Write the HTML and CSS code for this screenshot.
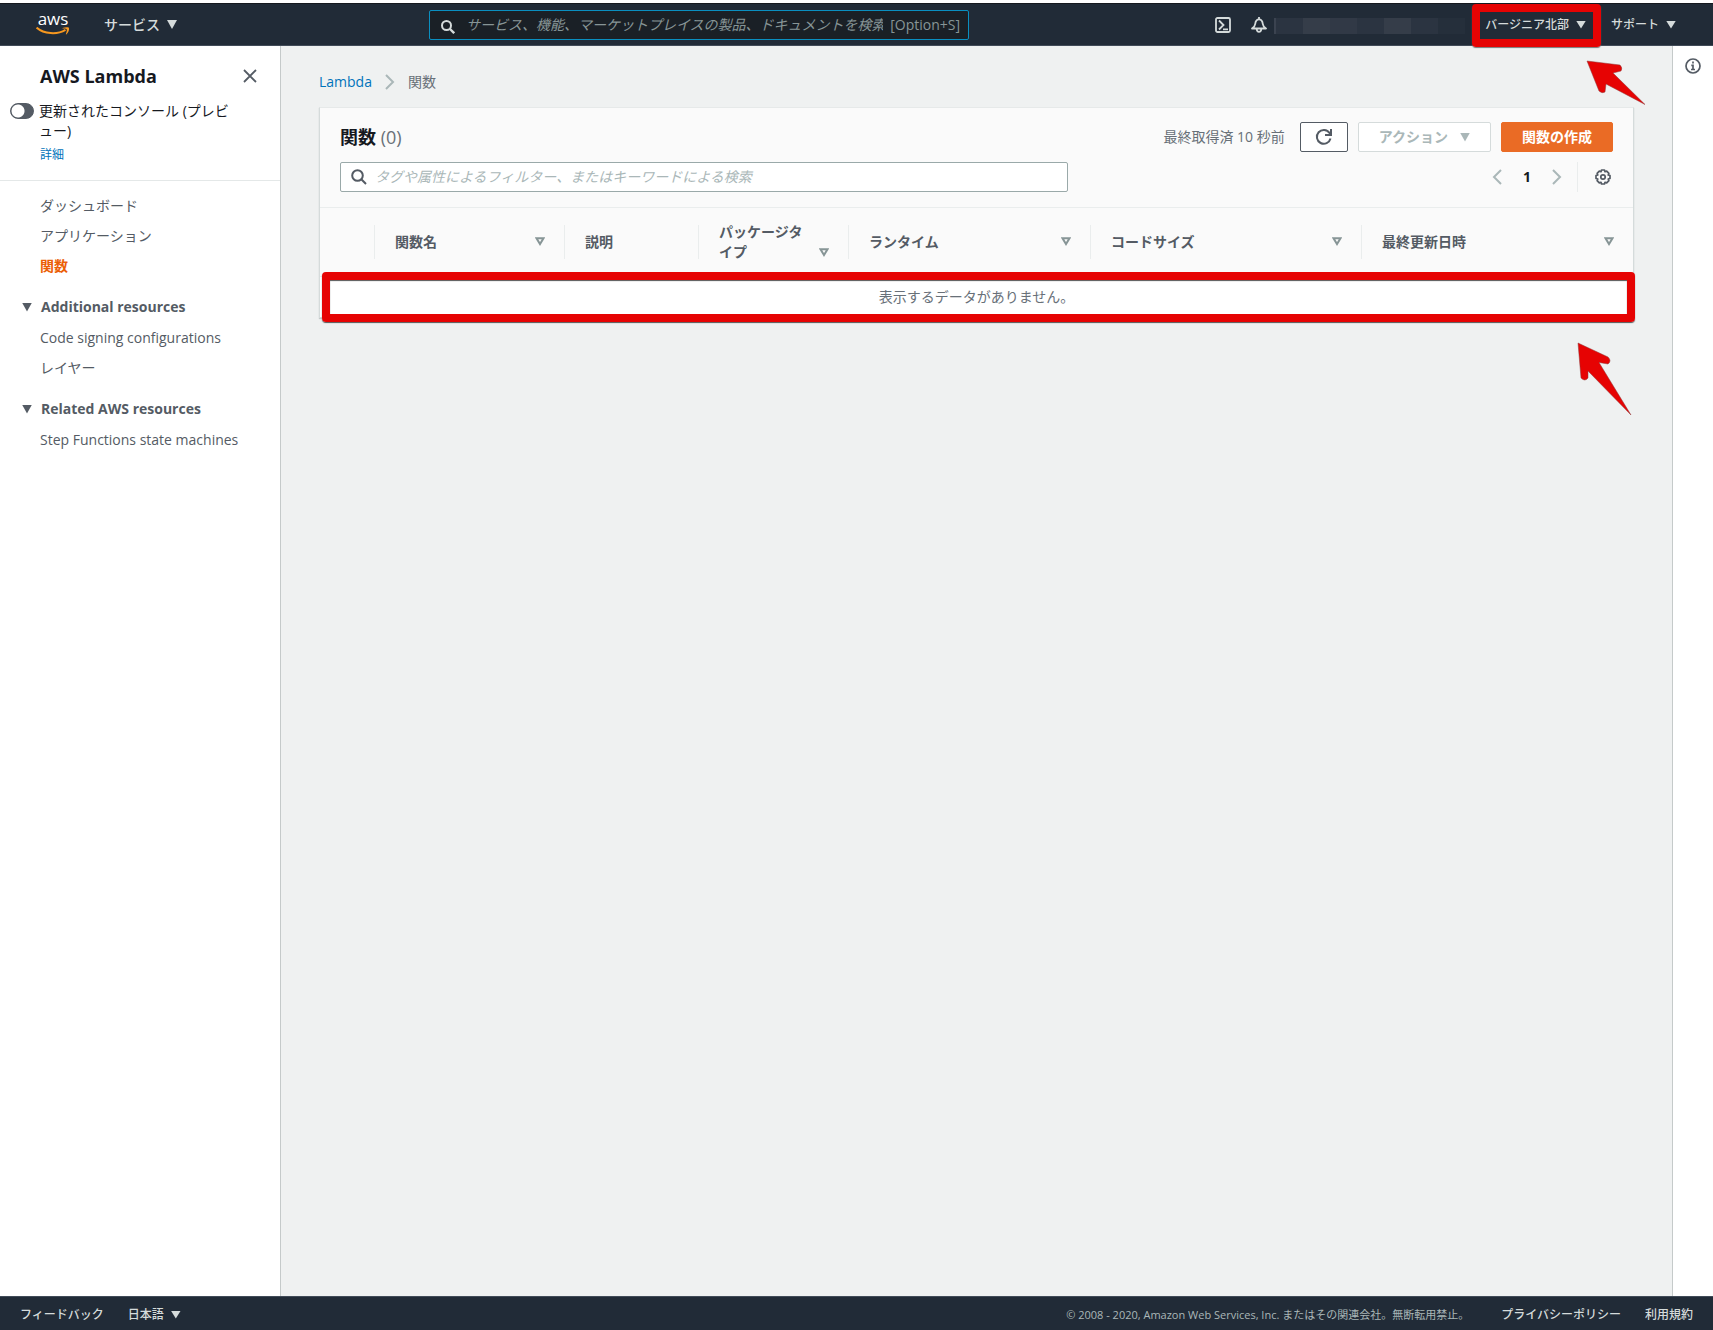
FILE: index.html
```html
<!DOCTYPE html>
<html lang="ja">
<head>
<meta charset="utf-8">
<meta name="viewport" content="width=device-width, initial-scale=1">
<title>関数 - Lambda</title>
<link rel="stylesheet" href="styles.css">
</head>
<body>
<header class="topbar">
  <a class="logo" href="#" aria-label="AWS">
    <span class="logo-text">aws</span>
    <svg class="logo-smile" width="34" height="9" viewBox="0 0 34 9"><path d="M.6.6C8 7 21 8 29.500 2.800" fill="none" stroke="#f7981f" stroke-width="2"/><path d="M26.500 1C29 .2 31.500 0 33 .7c.5 2-.7 4.800-2.700 6.800l-.5-.3c.8-2 1.300-4 .9-5-.9-.6-2.700-.6-4.200-.6z" fill="#f7981f"/></svg>
  </a>
  <button class="menu menu-large" type="button">サービス <i class="caret caret-large"></i></button>
  <div class="global-search">
    <svg width="14" height="14" viewBox="0 0 14 14" fill="none" stroke="#d5dbdb" stroke-width="2"><circle cx="5.500" cy="5.500" r="4.500"/><path d="M9 9l4.200 4.200" stroke-width="2.400"/></svg>
    <input type="search" aria-label="検索" placeholder="サービス、機能、マーケットプレイスの製品、ドキュメントを検索">
    <span>[Option+S]</span>
  </div>
  <div class="tools">
    <button class="icon-button" type="button" aria-label="CloudShell"><svg width="16" height="16" viewBox="0 0 16 16" fill="none" stroke="#d5dbdb" stroke-width="1.800"><rect x="1" y="1" width="14" height="14" rx="1.500"/><path d="M4 3.500L8.500 8 4 12.500M8 12.300h5"/></svg></button>
    <button class="icon-button" type="button" aria-label="通知"><svg width="16" height="16" viewBox="0 0 16 16" fill="none" stroke="#d5dbdb" stroke-width="1.800" stroke-linejoin="round"><path d="M1 11.500c2.500-1.500 3-2.500 3.200-4.500C4.500 4 5.800 2.300 8 2.300S11.500 4 11.800 7c.2 2 .7 3 3.200 4.500zM8 0v2.300M5.700 12c.2 3.800 4.400 3.800 4.600 0"/></svg></button>
    <div class="account"><i></i><i></i><i></i><i></i><i></i><i></i><i></i></div>
    <div class="region">
      <button class="menu" type="button">バージニア北部 <i class="caret"></i></button>
      <div class="mark"></div>
      <svg class="arrow arrow-region" width="62" height="48" viewBox="0 0 62 48"><path d="M1 1L34 5Q37 8 35 11L27 13 59 44.500 20 24 19 32Q16 34 13 31Z" fill="#e60303" stroke="#8c3a3a" stroke-width=".5"/></svg>
    </div>
    <button class="menu" type="button">サポート <i class="caret"></i></button>
  </div>
</header>

<div class="workspace">
  <aside class="sidebar">
    <div class="service">
      <div class="service-head">
        <h2>AWS Lambda</h2>
        <button class="icon-button" type="button" aria-label="閉じる"><svg width="14" height="14" viewBox="0 0 14 14" stroke="#545b64" stroke-width="1.800"><path d="M1 1l12 12M13 1L1 13"/></svg></button>
      </div>
      <label class="preview"><input type="checkbox" class="switch"><span>更新されたコンソール (プレビュー)</span></label>
      <a class="detail" href="#">詳細</a>
    </div>
    <nav>
      <ul>
        <li><a href="#">ダッシュボード</a></li>
        <li><a href="#">アプリケーション</a></li>
        <li><a class="current" href="#">関数</a></li>
      </ul>
      <h3><i class="caret caret-nav"></i>Additional resources</h3>
      <ul>
        <li><a href="#">Code signing configurations</a></li>
        <li><a href="#">レイヤー</a></li>
      </ul>
      <h3><i class="caret caret-nav"></i>Related AWS resources</h3>
      <ul>
        <li><a href="#">Step Functions state machines</a></li>
      </ul>
    </nav>
  </aside>

  <main>
    <div class="breadcrumb">
      <a href="#">Lambda</a>
      <svg width="10" height="16" viewBox="0 0 10 16" fill="none" stroke="#aab7b8" stroke-width="2"><path d="M1 1l7 7-7 7"/></svg>
      <span>関数</span>
    </div>
    <section class="card">
      <div class="card-head">
        <div class="row">
          <h1>関数 <span>(0)</span></h1>
          <div class="actions">
            <span class="fetched">最終取得済 10 秒前</span>
            <button class="btn btn-refresh" type="button" aria-label="更新"><svg width="18" height="18" viewBox="0 0 18 18" fill="none" stroke="#545b64" stroke-width="2"><path d="M15.500 10.500A6.900 6.900 0 1 1 14.500 5L16 7M16 1v6h-6"/></svg></button>
            <button class="btn btn-disabled" type="button" disabled>アクション <i class="caret caret-large"></i></button>
            <button class="btn btn-primary" type="button">関数の作成</button>
          </div>
        </div>
        <div class="row">
          <div class="filter">
            <svg width="16" height="16" viewBox="0 0 16 16" fill="none" stroke="#545b64" stroke-width="2"><circle cx="6.500" cy="6.500" r="5.300"/><path d="M10.300 10.300l4.700 4.700"/></svg>
            <input type="search" aria-label="フィルター" placeholder="タグや属性によるフィルター、またはキーワードによる検索">
          </div>
          <div class="pager">
            <button class="icon-button" type="button" aria-label="前へ"><svg width="10" height="16" viewBox="0 0 10 16" fill="none" stroke="#aab7b8" stroke-width="2"><path d="M9 1L2 8l7 7"/></svg></button>
            <b>1</b>
            <button class="icon-button" type="button" aria-label="次へ"><svg width="10" height="16" viewBox="0 0 10 16" fill="none" stroke="#aab7b8" stroke-width="2"><path d="M1 1l7 7-7 7"/></svg></button>
            <div class="settings"><button class="icon-button" type="button" aria-label="設定"><svg width="16" height="16" viewBox="0 0 16 16" fill="none" stroke="#545b64" stroke-width="1.700" stroke-linejoin="round"><path d="M6.500 1h3l.5 1.700 1.700-.6 2.200 2.200-.7 1.700L15 6.500v3l-1.800.5.7 1.700-2.200 2.200-1.700-.6-.5 1.700h-3L6 13.300l-1.700.6-2.200-2.200.7-1.700L1 9.500v-3L2.800 6l-.7-1.700 2.200-2.200 1.700.6z"/><circle cx="8" cy="8" r="2.200"/></svg></button></div>
          </div>
        </div>
      </div>
      <table>
        <colgroup><col class="c-select"><col class="c-name"><col class="c-desc"><col class="c-package"><col class="c-runtime"><col class="c-size"><col></colgroup>
        <thead>
          <tr>
            <td></td>
            <th scope="col"><div>関数名<svg class="sort" viewBox="0 0 10 9"><path d="M1.500 1.200h7L5 7z"/></svg></div></th>
            <th scope="col"><div>説明</div></th>
            <th scope="col"><div class="wrapped"><span>パッケージタイプ</span><svg class="sort" viewBox="0 0 10 9"><path d="M1.500 1.200h7L5 7z"/></svg></div></th>
            <th scope="col"><div>ランタイム<svg class="sort" viewBox="0 0 10 9"><path d="M1.500 1.200h7L5 7z"/></svg></div></th>
            <th scope="col"><div>コードサイズ<svg class="sort" viewBox="0 0 10 9"><path d="M1.500 1.200h7L5 7z"/></svg></div></th>
            <th scope="col"><div>最終更新日時<svg class="sort" viewBox="0 0 10 9"><path d="M1.500 1.200h7L5 7z"/></svg></div></th>
          </tr>
        </thead>
        <tbody><tr><td class="empty" colspan="7">表示するデータがありません。</td></tr></tbody>
      </table>
      <div class="mark mark-table"></div>
      <svg class="arrow arrow-table" width="56" height="76" viewBox="0 0 56 76"><path d="M1 1L31 15Q35 19 31 22L22 20.500 54 73 11 29 11 36Q8 40 4 36Z" fill="#e60303" stroke="#8c3a3a" stroke-width=".5"/></svg>
    </section>
  </main>

  <aside class="help">
    <button class="icon-button" type="button" aria-label="情報"><svg width="16" height="16" viewBox="0 0 16 16" fill="none" stroke="#545b64" stroke-width="1.700"><circle cx="8" cy="8" r="7"/><path d="M8 3.500v2M6.300 7.300H8v4.200M6 11.500h4"/></svg></button>
  </aside>
</div>

<footer class="footer">
  <button class="menu" type="button">フィードバック</button>
  <button class="menu" type="button">日本語 <i class="caret"></i></button>
  <small>© 2008 - 2020, Amazon Web Services, Inc. またはその関連会社。無断転用禁止。</small>
  <a href="#">プライバシーポリシー</a>
  <a href="#">利用規約</a>
</footer>
</body>
</html>
```
FILE: styles.css
```css
* { box-sizing: border-box; }

body {
  margin: 0;
  min-height: 100vh;
  display: flex;
  flex-direction: column;
  border-top: 3px solid #fff;
  background: #fff;
  color: #16191f;
  font: 14px/20px "Open Sans", "Noto Sans CJK JP", sans-serif;
}

button, input { font: inherit; color: inherit; }
button { padding: 0; border: 0; background: none; cursor: pointer; }
a { color: #0073bb; text-decoration: none; }
h1, h2, h3, ul { margin: 0; padding: 0; }
ul { list-style: none; }
svg { display: block; flex: none; }

input[type="search"] {
  flex: 1;
  min-width: 0;
  padding: 0;
  border: 0;
  outline: 0;
  background: none;
  appearance: none;
}
input::-webkit-search-cancel-button { display: none; }
input::placeholder { font-style: italic; opacity: 1; }

.icon-button { display: flex; }

.caret {
  width: 10px;
  height: 8px;
  background: currentColor;
  clip-path: polygon(0 0, 100% 0, 50% 100%);
}
.caret-large { height: 9px; }

.menu {
  display: flex;
  align-items: center;
  gap: 7px;
  color: #d5dbdb;
  font-size: 12px;
  font-weight: 500;
  white-space: nowrap;
}
.menu-large { font-size: 14px; }

/* Top bar */
.topbar {
  display: flex;
  align-items: center;
  height: 43px;
  padding: 0 37px 0 36px;
  border-top: 1px solid #16191f;
  border-bottom: 1px solid #414b58;
  background: #212b37;
}
.logo {
  width: 34px;
  margin-right: 34px;
  color: #fff;
}
.logo-text {
  display: block;
  height: 14px;
  font: 500 17px/12px "Open Sans", sans-serif;
  text-align: center;
}

.global-search {
  flex: 0 1 540px;
  display: flex;
  align-items: center;
  height: 30px;
  margin-left: 252px;
  padding: 0 8px 0 11px;
  border: 1px solid #0a8fc0;
  border-radius: 2px;
  background: #1a2026;
  color: #879596;
}
.global-search svg { margin: 4px 11px 0 0; }
.global-search input { margin-right: 7px; }
.global-search input::placeholder { color: #879596; }

.tools {
  display: flex;
  align-items: center;
  gap: 20px;
  margin-left: auto;
}
.account {
  display: flex;
  width: 191px;
  height: 16px;
  margin: 3px 0 0 -13px;
  border-left: 2px solid #3b4350;
}
.account i { flex: 1; background: #2b3441; }
.account i:nth-child(2), .account i:nth-child(5) { background: #353d49; }
.account i:nth-child(3) { background: #313946; }
.account i:nth-child(7) { background: #252f3b; }
.region { position: relative; margin-right: 5px; }

/* Callouts */
.mark {
  position: absolute;
  inset: -11px -15px -12px -13px;
  border: 8px solid #e60303;
  border-radius: 4px;
  box-shadow: 0 1px 1px #777;
  pointer-events: none;
}
.mark-table { inset: auto -2px -5px 2px; height: 50px; box-shadow: 0 1px 1px #555, inset 0 1px 1px #555; }
.arrow { position: absolute; z-index: 2; pointer-events: none; }
.arrow-region { left: 101px; top: 45px; }
.arrow-table { right: 0; top: 234px; }

/* Columns */
.workspace { flex: 1; display: flex; }

.sidebar {
  flex: 0 0 281px;
  border-right: 1px solid #c5caca;
}
.service {
  height: 135px;
  padding: 19px 23px 0 40px;
  border-bottom: 1px solid #e4e8e8;
}
.service-head {
  display: flex;
  align-items: center;
  justify-content: space-between;
}
h2 { font-size: 18px; line-height: 22px; }
.preview {
  display: flex;
  gap: 5px;
  margin: 14px 16px 0 -30px;
  line-break: anywhere;
}
.switch {
  flex: none;
  width: 24px;
  height: 16px;
  margin: 2px 0 0;
  border: 1px solid #545b64;
  border-radius: 8px;
  background: radial-gradient(circle at 7px 7px, #fff 6px, #545b64 7px);
  appearance: none;
}
.detail { display: block; margin-top: 4px; font-size: 12px; }

nav { padding: 15px 20px 0 40px; color: #545b64; }
nav a { color: #545b64; }
nav li { padding-bottom: 10px; }
nav .current { color: #eb5f07; font-weight: 700; }
h3 {
  display: flex;
  align-items: center;
  gap: 9px;
  margin: 2px 0 11px -18px;
  padding-top: 9px;
  font-size: 14px;
}
.caret-nav { height: 9px; }

main {
  flex: 1;
  min-width: 0;
  padding: 26px 38px 40px;
  background: #eff1f1;
}
.breadcrumb {
  display: flex;
  align-items: center;
  gap: 13px;
  margin-bottom: 15px;
  color: #687078;
}

.card {
  position: relative;
  border: 1px solid #d5dbdb;
  border-top-color: #e6e9e9;
  background: #fafafa;
  box-shadow: 0 1px 1px #c4c9c9;
}
.card-head {
  display: grid;
  gap: 10px;
  padding: 14px 20px 15px;
  border-bottom: 1px solid #eaeded;
}
.row {
  display: flex;
  align-items: center;
  justify-content: space-between;
  height: 30px;
}
h1 { font-size: 18px; }
h1 span { color: #687078; font-weight: 400; }
.actions { display: flex; align-items: center; gap: 10px; }
.fetched { margin-right: 5px; color: #687078; }
.btn {
  display: flex;
  align-items: center;
  justify-content: center;
  gap: 12px;
  height: 30px;
  padding: 0 20px;
  border: 1px solid #545b64;
  border-radius: 2px;
  background: #fff;
  font-weight: 700;
}
.btn-refresh { padding: 0 14px; }
.btn-disabled { border-color: #d5dbdb; color: #aab7b8; }
.btn-primary { border-color: #ea6b25; background: #ea6b25; color: #fff; }

.filter {
  flex: 0 1 728px;
  display: flex;
  align-items: center;
  gap: 8px;
  height: 30px;
  padding: 0 10px;
  border: 1px solid #9aa9a9;
  border-radius: 2px;
  background: #fff;
}
.filter input::placeholder { color: #aab7b8; }
.pager { display: flex; align-items: center; gap: 21px; }
.settings {
  display: flex;
  align-items: center;
  height: 30px;
  margin-left: -6px;
  padding: 0 2px 0 17px;
  border-left: 1px solid #eaeded;
}

table { width: 100%; border-collapse: collapse; table-layout: fixed; color: #545b64; }
.c-select { width: 54px; }
.c-name { width: 190px; }
.c-desc { width: 134px; }
.c-package { width: 150px; }
.c-runtime { width: 242px; }
.c-size { width: 271px; }
th, td { padding: 0; }
th { height: 68px; text-align: left; }
th div {
  display: flex;
  align-items: center;
  justify-content: space-between;
  min-height: 34px;
  padding: 0 19px 0 20px;
  border-left: 1px solid #eaeded;
}
th .wrapped { height: 34px; gap: 12px; line-break: anywhere; align-items: flex-end; }
.wrapped span { align-self: center; }
.sort { width: 10px; height: 9px; fill: none; stroke: #879596; stroke-width: 2; }
.wrapped .sort { margin-bottom: 2px; }
.empty {
  height: 41px;
  border-top: 1px solid #eaeded;
  background: #fff;
  text-align: center;
  color: #687078;
}

.help {
  flex: 0 0 41px;
  padding: 12px;
  border-left: 1px solid #c5caca;
}

/* Footer */
.footer {
  display: flex;
  align-items: center;
  gap: 24px;
  height: 34px;
  padding: 2px 20px 0;
  border-top: 1px solid #414b58;
  background: #212b37;
}
.footer small { margin-left: auto; margin-right: 8px; color: #aab7b8; font-size: 11px; }
.footer a { color: #d5dbdb; font-size: 12px; font-weight: 500; }
```
